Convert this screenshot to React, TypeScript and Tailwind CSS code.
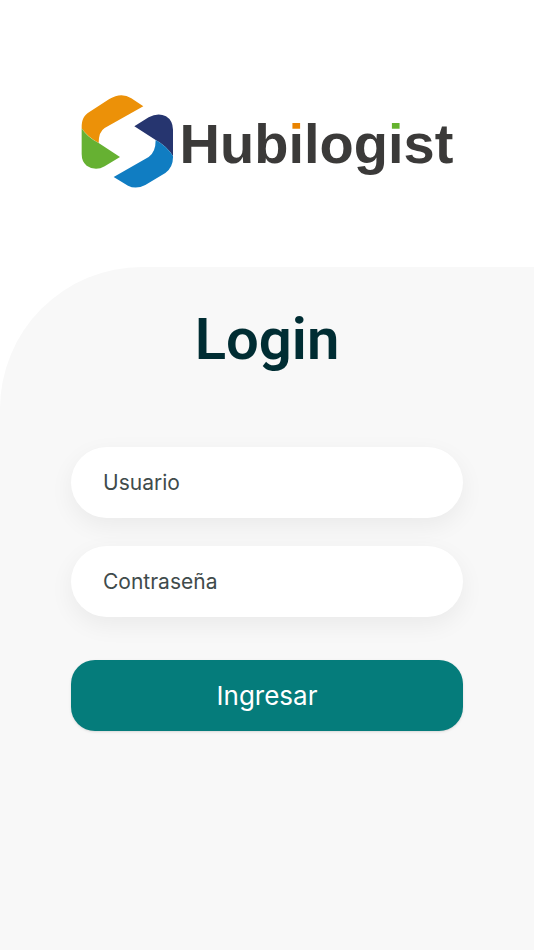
import { useState } from 'react'

const INPUT =
  'block h-[71px] w-full rounded-full bg-white px-8 font-[Inter,sans-serif] text-[21px] text-[#3f4b4b] placeholder-[#3f4b4b] shadow-[0_8px_24px_rgba(0,0,0,0.06)] outline-none'

function LogoMark() {
  return (
    <svg viewBox="33 25 279 285" className="h-[95px] w-[93px] shrink-0" aria-hidden="true">
      <path fill="#ec9108" d="M35 128C35 100 42 90 58 79L118 40Q154 18 184 38L220 62L104 127Q86 138 86 172Q50 152 35 128Z" />
      <path fill="#66b132" d="M35 128Q50 154 86 172L150 214L104 242Q76 258 50 240Q35 228 35 205Z" />
      <path fill="#26356f" d="M193 122L236 95Q264 80 288 92Q308 104 309 132V212Q292 182 257 163Z" />
      <path fill="#107dc2" d="M257 163Q292 182 309 212Q310 244 286 262L226 298Q198 312 174 300L131 274L236 214Q257 200 257 163Z" />
    </svg>
  )
}

function Logo() {
  return (
    <div className="flex items-center gap-1.5">
      <LogoMark />
      <span className="pt-1 font-['Liberation_Sans',sans-serif] text-[56px] leading-none font-bold text-[#3b3a39]">
        Hub
        <span className="bg-linear-to-b from-[#e98300] from-32% to-[#3b3a39] to-32% bg-clip-text text-transparent">i</span>
        log
        <span className="bg-linear-to-b from-[#65b32e] from-32% to-[#3b3a39] to-32% bg-clip-text text-transparent">i</span>
        st
      </span>
    </div>
  )
}

export default function App() {
  const [user, setUser] = useState('')
  const [password, setPassword] = useState('')

  return (
    <div className="flex min-h-screen flex-col bg-white">
      <header className="flex h-[267px] items-center justify-center pt-4">
        <Logo />
      </header>

      <main className="flex-1 rounded-tl-[142px] bg-[#f8f8f8] px-[71px] pt-10">
        <h1 className="text-center font-[Roboto,sans-serif] text-[58px] leading-[64px] font-semibold text-[#002d33]">
          Login
        </h1>

        <form className="mt-19" onSubmit={e => e.preventDefault()}>
          <input
            type="text"
            aria-label="Usuario"
            placeholder="Usuario"
            value={user}
            onChange={e => setUser(e.target.value)}
            className={INPUT}
          />
          <input
            type="password"
            aria-label="Contraseña"
            placeholder="Contraseña"
            value={password}
            onChange={e => setPassword(e.target.value)}
            className={INPUT + ' mt-7'}
          />
          <button
            type="submit"
            className="mt-[43px] h-[71px] w-full rounded-3xl bg-[#057c7b] font-[Inter,sans-serif] text-[26px] text-white shadow-sm"
          >
            Ingresar
          </button>
        </form>
      </main>
    </div>
  )
}
